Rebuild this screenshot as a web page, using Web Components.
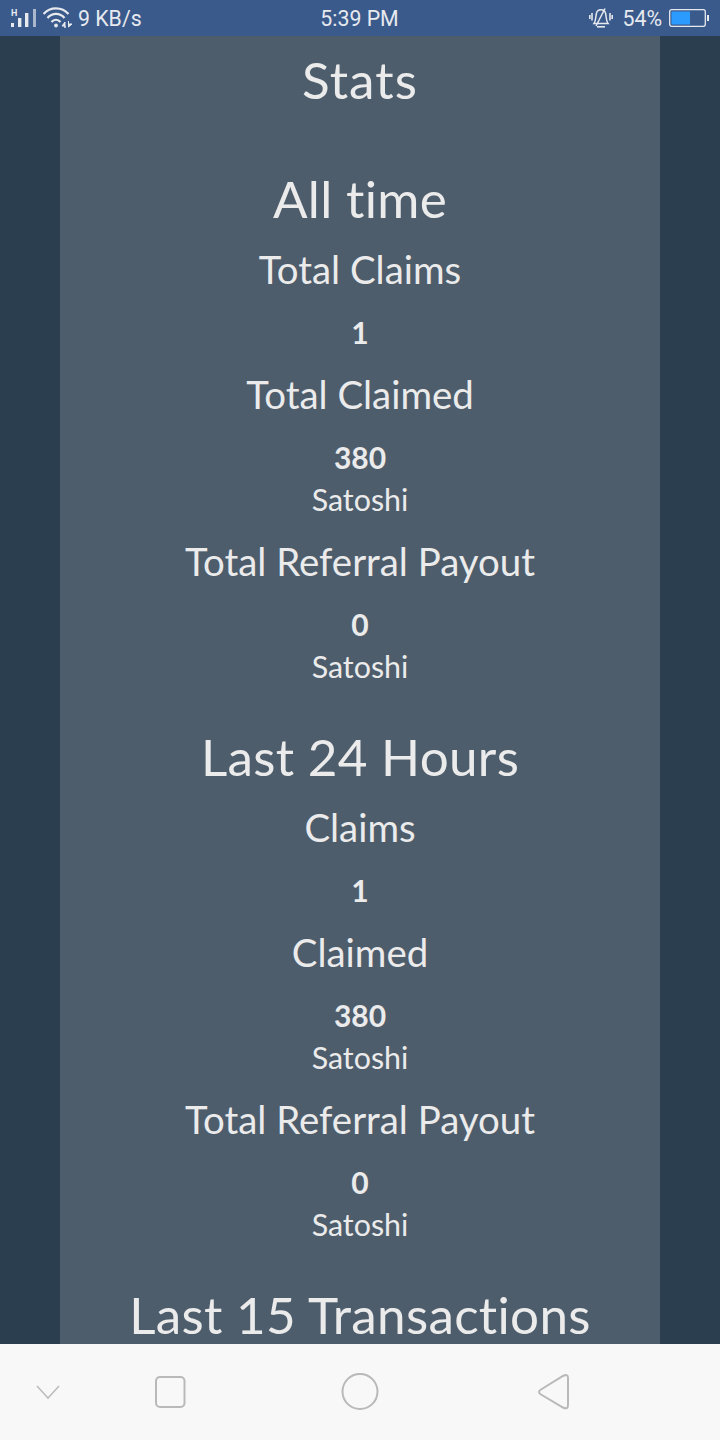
<!DOCTYPE html>
<html>
<head>
<meta charset="utf-8">
<title>Stats</title>
<style>
  html, body { margin: 0; padding: 0; background: #2b3e50; }
</style>
</head>
<body>
<phone-screen>
  <status-bar slot="top"></status-bar>
  <stats-panel>
    <h-title>Stats</h-title>
    <stats-group heading="All time">
      <stat-item label="Total Claims" value="1"></stat-item>
      <stat-item label="Total Claimed" value="380" unit="Satoshi"></stat-item>
      <stat-item label="Total Referral Payout" value="0" unit="Satoshi"></stat-item>
    </stats-group>
    <stats-group heading="Last 24 Hours">
      <stat-item label="Claims" value="1"></stat-item>
      <stat-item label="Claimed" value="380" unit="Satoshi"></stat-item>
      <stat-item label="Total Referral Payout" value="0" unit="Satoshi"></stat-item>
    </stats-group>
    <stats-group heading="Last 15 Transactions"></stats-group>
  </stats-panel>
  <nav-bar slot="bottom"></nav-bar>
</phone-screen>

<script>
  function define(name, html, init) {
    customElements.define(name, class extends HTMLElement {
      constructor() {
        super();
        this.attachShadow({ mode: 'open' }).innerHTML = html;
      }
      connectedCallback() {
        if (init) init(this, this.shadowRoot);
      }
    });
  }

  define('phone-screen', `
<style>
  :host { display: flex; flex-direction: column; width: 720px; height: 1440px; overflow: hidden; background: #2b3e50; }
  .middle { flex: 1; min-height: 0; overflow: hidden; display: flex; justify-content: center; }
</style>
<slot name="top"></slot>
<div class="middle"><slot></slot></div>
<slot name="bottom"></slot>`);

  define('status-bar', `
<style>
  :host { display: flex; align-items: center; height: 36px; background: #3a5a8c; color: #e6e9ee; font: 21.3px Roboto, sans-serif; }
  .left { display: flex; align-items: center; padding-left: 10px; flex: 1; }
  .speed { margin-left: 5px; }
  .time { flex: 1; text-align: center; }
  .right { flex: 1; display: flex; align-items: center; justify-content: flex-end; padding-right: 11px; }
  .pct { margin: 0 7px 0 9px; }
  svg { display: block; }
</style>
<div class="left">
  <svg width="28" height="22" viewBox="0 0 28 22" fill="#e6e9ee">
    <text x="1" y="8.5" font-size="9" font-family="Roboto" font-weight="700">H</text>
    <rect x="1" y="16" width="3" height="4"/>
    <rect x="8" y="11" width="3.4" height="9"/>
    <rect x="15" y="6" width="3.4" height="14"/>
    <rect x="23" y="2" width="3" height="18" opacity=".65"/>
  </svg>
  <svg width="30" height="24" viewBox="0 0 30 24" fill="none" stroke="#e6e9ee" stroke-width="2.2" style="margin-left:5px">
    <path d="M0.500 8 C7 0.500 19 0.500 25.500 8"/>
    <path d="M4.500 12 C9 6.500 17 6.500 21.500 12"/>
    <path d="M8.500 16 C11 13 15 13 17.500 16"/>
    <circle cx="13" cy="19.500" r="1.9" fill="#e6e9ee" stroke="none"/>
    <path d="M22 22 V16 L19 20 H22 Z M25.500 15 V21 L29 18 H25.500 Z" stroke-width="1" fill="#e6e9ee"/>
  </svg>
  <span class="speed">9 KB/s</span>
</div>
<div class="time">5:39 PM</div>
<div class="right">
  <svg width="24" height="20" viewBox="0 0 24 20" fill="none" stroke="#e6e9ee" stroke-width="1.5">
    <path d="M5 15.500 C7 13 6.500 9 7.500 5 C8.500 0.500 15.500 0.500 16.500 5 C17.500 9 17 13 19 15.500 Z"/>
    <path d="M8 18.800 H16" stroke-width="1.6"/>
    <path d="M16 0.500 L7 18"/>
    <path d="M3 5 V12.500 M0.800 7 V11 M21 5 V12.500 M23.200 7 V11" stroke-width="1.6"/>
  </svg>
  <span class="pct">54%</span>
  <svg width="40" height="18" viewBox="0 0 40 18">
    <rect x="0.7" y="0.700" width="35.600" height="16.600" rx="2" fill="none" stroke="#e6e9ee" stroke-width="1.3"/>
    <rect x="2.500" y="2.500" width="18.500" height="13" fill="#2c9bff"/>
    <rect x="38" y="6" width="2" height="6" fill="#e6e9ee"/>
  </svg>
</div>`);

  define('stats-panel', `
<style>
  :host { display: block; width: 600px; background: #4e5d6c; color: #ebebeb; font-family: Lato, sans-serif; text-align: center; font-variant-ligatures: none; }
</style>
<slot></slot>`);

  define('h-title', `
<style>
  :host { display: block; font-size: 51.2px; letter-spacing: 1.1px; line-height: 60px; padding-top: 13px; margin-bottom: 39px; }
</style>
<slot></slot>`);

  define('stats-group', `
<style>
  :host { display: block; padding-top: 20px; }
  .h { font-size: 51.2px; letter-spacing: 0.3px; line-height: 60px; margin-bottom: 19px; }
  .list { display: block; }
</style>
<div class="h"></div>
<div class="list"><slot></slot></div>`, function (el, root) {
    root.querySelector('.h').textContent = el.getAttribute('heading');
  });

  define('stat-item', `
<style>
  :host { display: block; padding-bottom: 22px; }
  .label { font-size: 38.4px; line-height: 44px; padding-bottom: 23px; }
  .value { font-size: 30px; line-height: 36px; font-weight: 700; }
  .unit { font-size: 30.4px; line-height: 36px; margin-top: 6px; }
  .unit:empty { display: none; }
</style>
<div class="label"></div>
<div class="value"></div>
<div class="unit"></div>`, function (el, root) {
    root.querySelector('.label').textContent = el.getAttribute('label');
    root.querySelector('.value').textContent = el.getAttribute('value');
    root.querySelector('.unit').textContent = el.getAttribute('unit') || '';
  });

  define('nav-bar', `
<style>
  :host { display: block; height: 96px; flex: none; background: #f8f8f8; }
  svg { display: block; width: 720px; height: 96px; }
</style>
<svg viewBox="0 0 720 96" fill="none" stroke="#b9b9b9" stroke-width="2">
  <path d="M37 42 L48 54 L59 42" stroke="#bdbdbd" stroke-width="1.6"/>
  <rect x="156" y="33" width="28.500" height="30" rx="4"/>
  <circle cx="360" cy="47.500" r="17.500"/>
  <path d="M541 45.500 L563 32 Q568 29.500 568 34 V61 Q568 66 563 63.500 L541 50.500 Q537 48 541 45.500 Z"/>
</svg>`);
</script>
</body>
</html>
